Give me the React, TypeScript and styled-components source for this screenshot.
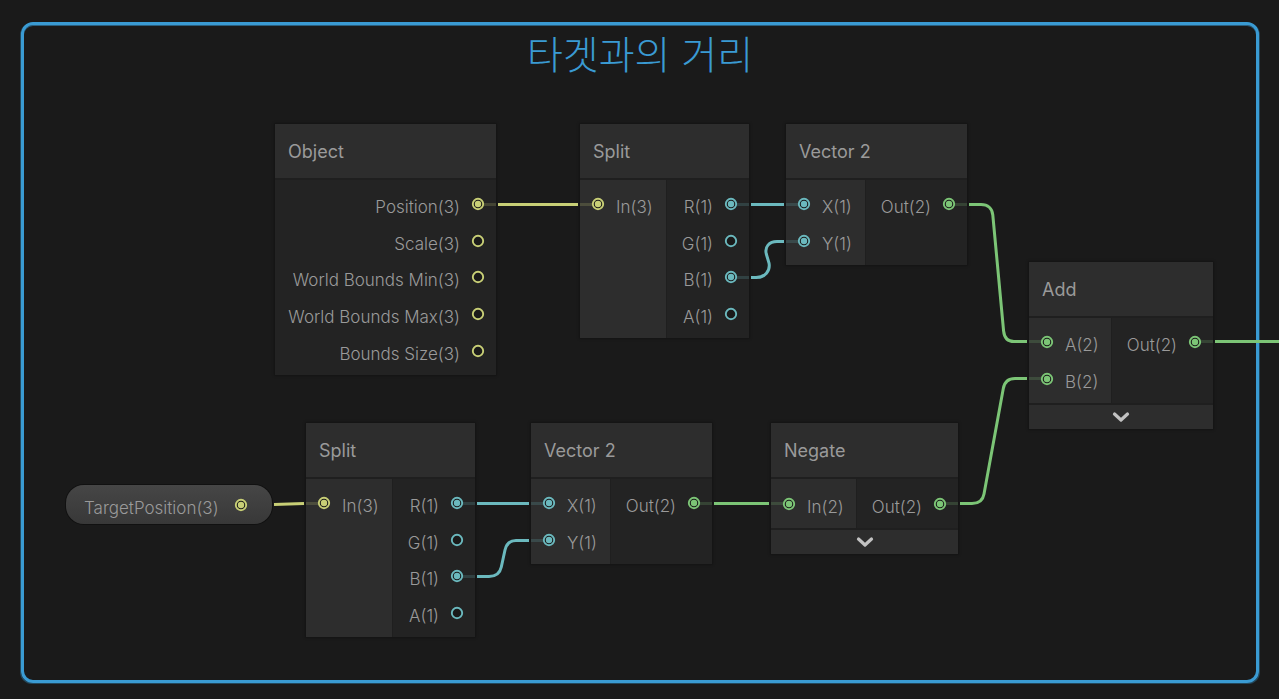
import React from "react";
import styled, { createGlobalStyle } from "styled-components";

const colors = {
  canvas: "#1a1a1a",
  panel: "#2d2d2d",
  panelDark: "#232323",
  divider: "#1f1f1f",
  text: "#9a9a9a",
  group: "#3a9bd3",
  vec3: "#c8cf76",
  float: "#6bb9be",
  vec2: "#7cc576",
};

type Wire = "vec3" | "float" | "vec2";

const GlobalStyle = createGlobalStyle`
  * { box-sizing: border-box; }
  body { margin: 0; background: ${colors.canvas}; }
`;

const Canvas = styled.main`
  position: relative;
  display: flex;
  min-height: 100vh;
  padding: 22px 20px 16px 21px;
  overflow: hidden;
  background: ${colors.canvas};
  color: ${colors.text};
  font-family: Inter, "Noto Sans CJK KR", sans-serif;
`;

const Group = styled.section`
  flex: 1;
  min-height: 661px;
  border: 3px solid ${colors.group};
  border-radius: 12px;
  box-shadow: -1px 1px 0 #23485c, 1px 1px 0 #23485c, inset 0 1px 0 #2a5f7e;
`;

const GroupTitle = styled.h1`
  margin: 0;
  color: ${colors.group};
  font-family: "Noto Sans CJK KR", sans-serif;
  font-size: 39px;
  font-weight: 300;
  line-height: 54px;
  text-align: center;
`;

const NodeBox = styled.article<{ $x: number; $y: number; $w: number }>`
  position: absolute;
  left: ${(p) => p.$x}px;
  top: ${(p) => p.$y}px;
  width: ${(p) => p.$w}px;
  background: ${colors.divider};
  box-shadow: 0 0 2px 1px #141414;
`;

const NodeTitle = styled.h2`
  margin: 0 0 2px;
  padding: 2px 13px 0;
  background: ${colors.panel};
  font-size: 18px;
  font-weight: 400;
  line-height: 52px;
`;

const NodeBody = styled.div<{ $inputs?: number; $h: number }>`
  display: grid;
  grid-template-columns: ${(p) => (p.$inputs ? `${p.$inputs}px 1fr` : "1fr")};
  column-gap: 1px;
  min-height: ${(p) => p.$h}px;
`;

const PortList = styled.ul<{ $input?: boolean; $rows: number }>`
  display: grid;
  grid-template-rows: repeat(${(p) => p.$rows}, 1fr);
  margin: 0;
  padding: 6px 12px;
  list-style: none;
  background: ${(p) => (p.$input ? colors.panel : colors.panelDark)};
`;

const PortRow = styled.li<{ $input?: boolean }>`
  display: flex;
  flex-direction: ${(p) => (p.$input ? "row" : "row-reverse")};
  align-items: center;
  gap: 12px;
`;

const PortLabel = styled.span`
  padding-top: 6px;
  font-size: 17px;
  font-weight: 300;
  line-height: 20px;
  white-space: nowrap;
`;

const PortIcon = styled.svg<{ $wire: Wire }>`
  flex: none;
  width: 12px;
  height: 12px;
  overflow: visible;
  color: ${(p) => colors[p.$wire]};
`;

const ExpandButton = styled.button`
  display: flex;
  align-items: center;
  justify-content: center;
  width: 100%;
  height: 24px;
  margin-top: 2px;
  padding: 0;
  border: 0;
  background: ${colors.panel};
  color: #c2c2c2;
`;

const Property = styled.div`
  position: absolute;
  left: 66px;
  top: 485px;
  display: flex;
  align-items: center;
  justify-content: space-between;
  width: 206px;
  height: 39px;
  padding: 0 25px 0 18px;
  border-radius: 18px;
  background: linear-gradient(#464646, #383838);
  box-shadow: 0 0 0 1px #111111;
`;

const Wires = styled.svg`
  position: absolute;
  inset: 0;
  width: 100%;
  height: 100%;
  fill: none;
  stroke-width: 3;
  pointer-events: none;
`;

type Port = { label: string; wire: Wire; on?: boolean };
type NodeData = {
  title: string;
  x: number;
  y: number;
  w: number;
  h: number;
  inputWidth?: number;
  inputs?: Port[];
  outputs: Port[];
  expandable?: boolean;
};

const splitPorts = {
  inputs: [{ label: "In(3)", wire: "vec3", on: true }] as Port[],
  outputs: [
    { label: "R(1)", wire: "float", on: true },
    { label: "G(1)", wire: "float" },
    { label: "B(1)", wire: "float", on: true },
    { label: "A(1)", wire: "float" },
  ] as Port[],
};

const vectorPorts = {
  inputs: [
    { label: "X(1)", wire: "float", on: true },
    { label: "Y(1)", wire: "float", on: true },
  ] as Port[],
  outputs: [{ label: "Out(2)", wire: "vec2", on: true }] as Port[],
};

const nodes: NodeData[] = [
  {
    title: "Object",
    x: 275,
    y: 124,
    w: 221,
    h: 195,
    outputs: [
      { label: "Position(3)", wire: "vec3", on: true },
      { label: "Scale(3)", wire: "vec3" },
      { label: "World Bounds Min(3)", wire: "vec3" },
      { label: "World Bounds Max(3)", wire: "vec3" },
      { label: "Bounds Size(3)", wire: "vec3" },
    ],
  },
  { title: "Split", x: 580, y: 124, w: 169, h: 158, inputWidth: 86, ...splitPorts },
  { title: "Vector 2", x: 786, y: 124, w: 181, h: 85, inputWidth: 79, ...vectorPorts },
  {
    title: "Add",
    x: 1029,
    y: 262,
    w: 184,
    h: 85,
    inputWidth: 82,
    expandable: true,
    inputs: [
      { label: "A(2)", wire: "vec2", on: true },
      { label: "B(2)", wire: "vec2", on: true },
    ],
    outputs: [{ label: "Out(2)", wire: "vec2", on: true }],
  },
  { title: "Split", x: 306, y: 423, w: 169, h: 158, inputWidth: 86, ...splitPorts },
  { title: "Vector 2", x: 531, y: 423, w: 181, h: 85, inputWidth: 79, ...vectorPorts },
  {
    title: "Negate",
    x: 771,
    y: 423,
    w: 187,
    h: 49,
    inputWidth: 85,
    expandable: true,
    inputs: [{ label: "In(2)", wire: "vec2", on: true }],
    outputs: [{ label: "Out(2)", wire: "vec2", on: true }],
  },
];

const wires: { wire: Wire; d: string }[] = [
  { wire: "vec3", d: "M498 204.5H578" },
  { wire: "float", d: "M751 204.5H784" },
  {
    wire: "float",
    d: "M751 277.5H756C765 277.5 770.5 271 769 263L766.3 254C764.5 247 769 241.5 777 241.5H784",
  },
  {
    wire: "vec2",
    d: "M969 204.5H981C988 204.5 992.2 208.5 992.8 215L1003.6 331C1004.3 338 1008 341.5 1014 341.5H1027",
  },
  {
    wire: "vec2",
    d: "M960 503.5H972C979 503.5 983 500 984 494L1003.3 388.5C1004.5 382 1008 378.5 1015 378.5H1027",
  },
  { wire: "vec3", d: "M274 504.5L304 503.5" },
  { wire: "float", d: "M477 503.5H529" },
  {
    wire: "float",
    d: "M477 576.5H489C496 576.5 500 573 501.3 567L505 550C506.5 543.5 510 540.5 516 540.5H529",
  },
  { wire: "vec2", d: "M714 503.5H769" },
];

/* Faded part of each wire, between a port and the edge of its node. */
const stubs: { wire: Wire; d: string }[] = [
  { wire: "vec3", d: "M484 204.5H496M580 204.5H592M306 503.5H318" },
  {
    wire: "float",
    d: "M737 204.5H749M737 277.5H749M786 204.5H798M786 241.5H798M463 503.5H475M463 576.5H475M531 503.5H543M531 540.5H543",
  },
  {
    wire: "vec2",
    d: "M955 204.5H967M1029 341.5H1041M1029 378.5H1041M1201 341.5H1213M700 503.5H712M771 503.5H783M946 503.5H958",
  },
];

function PortDot({ wire, on }: { wire: Wire; on?: boolean }) {
  return (
    <PortIcon $wire={wire} viewBox="0 0 12 12" aria-hidden="true">
      <circle cx="6" cy="6" r="5.200" fill={colors.canvas} stroke="currentColor" strokeWidth="1.900" />
      {on && <circle cx="6" cy="6" r="3.200" fill="currentColor" />}
    </PortIcon>
  );
}

function Ports({ ports, rows, input }: { ports: Port[]; rows: number; input?: boolean }) {
  return (
    <PortList $input={input} $rows={rows}>
      {ports.map((p) => (
        <PortRow key={p.label} $input={input}>
          <PortDot wire={p.wire} on={p.on} />
          <PortLabel>{p.label}</PortLabel>
        </PortRow>
      ))}
    </PortList>
  );
}

function GraphNode({ node }: { node: NodeData }) {
  const rows = Math.max(node.inputs?.length ?? 0, node.outputs.length);
  return (
    <NodeBox $x={node.x} $y={node.y} $w={node.w}>
      <NodeTitle>{node.title}</NodeTitle>
      <NodeBody $inputs={node.inputWidth} $h={node.h}>
        {node.inputs && <Ports ports={node.inputs} rows={rows} input />}
        <Ports ports={node.outputs} rows={rows} />
      </NodeBody>
      {node.expandable && (
        <ExpandButton type="button" aria-label={`Expand ${node.title}`}>
          <svg
            width="18"
            height="12"
            viewBox="0 0 18 12"
            fill="none"
            stroke="currentColor"
            strokeWidth="3.200"
            strokeLinecap="round"
            strokeLinejoin="round"
          >
            <path d="M2.5 3L9 9L15.500 3" />
          </svg>
        </ExpandButton>
      )}
    </NodeBox>
  );
}

export default function App() {
  return (
    <>
      <GlobalStyle />
      <Canvas>
        <Group>
          <GroupTitle lang="ko">타겟과의 거리</GroupTitle>
        </Group>
        {nodes.map((n) => (
          <GraphNode key={`${n.title}-${n.x}`} node={n} />
        ))}
        <Property>
          <PortLabel>TargetPosition(3)</PortLabel>
          <PortDot wire="vec3" on />
        </Property>
        <Wires aria-hidden="true">
          {stubs.map((s) => (
            <path key={s.d} d={s.d} stroke={colors[s.wire]} opacity="0.2" />
          ))}
          {wires.map((w) => (
            <path key={w.d} d={w.d} stroke={colors[w.wire]} />
          ))}
          <line x1="1215" y1="341.5" x2="100%" y2="341.5" stroke={colors.vec2} />
        </Wires>
      </Canvas>
    </>
  );
}
